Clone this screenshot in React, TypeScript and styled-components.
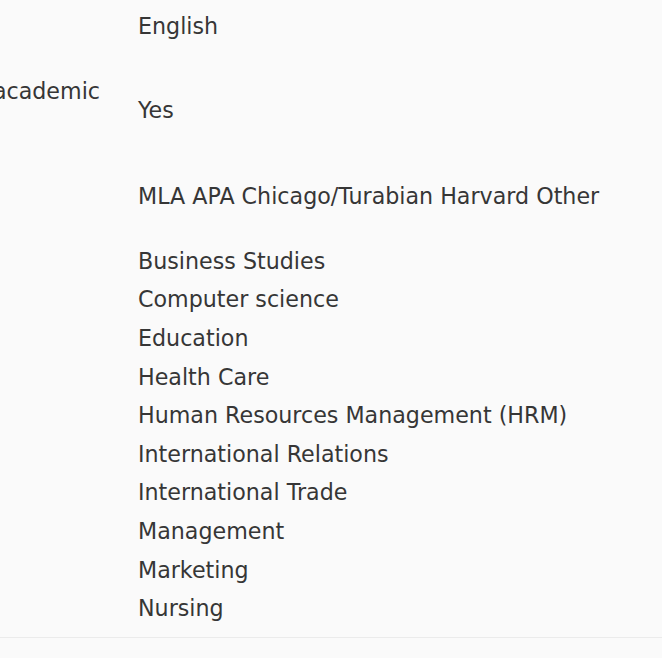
import React from "react";
import styled, { createGlobalStyle } from "styled-components";

const GlobalStyle = createGlobalStyle`
  html, body {
    margin: 0;
    padding: 0;
    background: #fafafa;
    overflow: hidden;
  }
  body {
    font-family: "DejaVu Sans", "Liberation Sans", sans-serif;
    color: #363636;
  }
`;

const Page = styled.div`
  width: 662px;
  height: 658px;
  overflow: hidden;
  background: #fafafa;
`;

const Details = styled.dl`
  margin: 0 0 0 -140px;
  padding: 7px 0 9px;
  display: grid;
  grid-template-columns: 240px 1fr;
  column-gap: 38px;
  font-size: 22.2px;
  line-height: 38.6px;
  border-bottom: 1px solid #ebebeb;
  width: 802px;
`;

const Label = styled.dt<{ $last?: boolean }>`
  margin: 0;
  text-align: right;
  white-space: nowrap;
  padding-bottom: ${(p) => (p.$last ? 0 : 26)}px;
`;

const Value = styled.dd<{ $offset?: number; $last?: boolean }>`
  margin: 0;
  white-space: nowrap;
  padding-top: ${(p) => p.$offset ?? 0}px;
  padding-bottom: ${(p) => (p.$last ? 0 : 26)}px;
`;

const SubjectList = styled.ul`
  list-style: none;
  margin: 0;
  padding: 0;
`;

const Subject = styled.li`
  margin: 0;
`;

const subjects = [
  "Business Studies",
  "Computer science",
  "Education",
  "Health Care",
  "Human Resources Management (HRM)",
  "International Relations",
  "International Trade",
  "Management",
  "Marketing",
  "Nursing",
];

export default function App() {
  return (
    <Page>
      <GlobalStyle />
      <Details>
        <Label />
        <Value>English</Value>
        <Label>Non-academic</Label>
        <Value $offset={19}>Yes</Value>
        <Label />
        <Value $offset={22}>MLA APA Chicago/Turabian Harvard Other</Value>
        <Label $last />
        <Value $last>
          <SubjectList>
            {subjects.map((s) => (
              <Subject key={s}>{s}</Subject>
            ))}
          </SubjectList>
        </Value>
      </Details>
    </Page>
  );
}
